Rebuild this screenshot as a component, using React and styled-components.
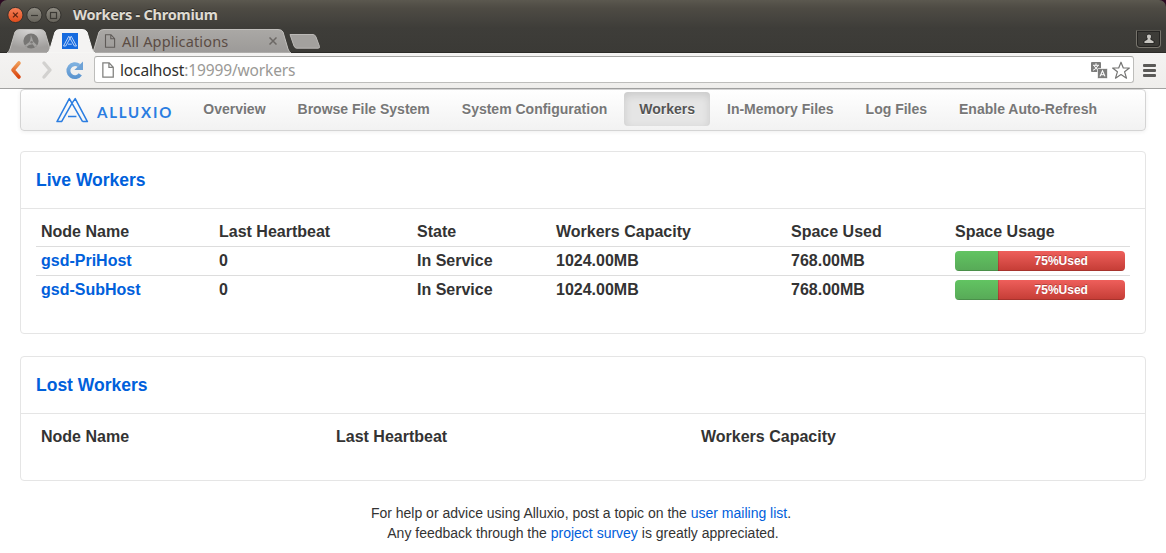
import React from "react";
import styled, { createGlobalStyle, css } from "styled-components";

const Global = createGlobalStyle`
  * { box-sizing: border-box; }
  html, body { margin: 0; padding: 0; }
  body { background: #fff; overflow: hidden; font-family: "Liberation Sans", Arial, sans-serif; color: #333; }
`;

const uiFont = css`font-family: "Noto Sans", "Open Sans", sans-serif;`;
const blue = "#0060db";

const Window = styled.div`
  width: 1166px;
  height: 553px;
  overflow: hidden;
`;

const Frame = styled.header`
  height: 53px;
  background: #2c0a22;
`;
const FrameInner = styled.div`
  height: 53px;
  border-radius: 7px 7px 0 0;
  background: linear-gradient(#5b584f 0, #4e4b44 8px, #3e3d39 28px, #3b3a36 52px);
  border-bottom: 1px solid #2c2b28;
`;
const TitleBar = styled.div`
  height: 29px;
  display: flex;
  align-items: center;
  padding-left: 7px;
`;
const WindowTitle = styled.div`
  ${uiFont}
  font-size: 14.5px;
  line-height: 20px;
  font-weight: 700;
  letter-spacing: -0.24px;
  color: #dfdbd2;
  margin: 0 0 1px 11px;
  text-shadow: 0 -1px 0 #2b2a27;
  white-space: nowrap;
`;
const TabStrip = styled.div`
  height: 24px;
  display: flex;
  padding-left: 7px;
`;
const Tab = styled.div`
  position: relative;
  flex: none;
  width: ${(p) => p.$width}px;
  height: 24px;
  margin-right: ${(p) => p.$gap}px;
  z-index: ${(p) => (p.$active ? 2 : 1)};
  display: flex;
  align-items: center;
  padding-left: ${(p) => p.$pad}px;
  > svg:first-child { position: absolute; left: 0; top: 0; z-index: -1; }
`;
const TabLabel = styled.span`
  ${uiFont}
  font-size: 14.5px;
  line-height: 20px;
  letter-spacing: 0.16px;
  color: #5b4c44;
  width: 147px;
  margin-left: 6px;
  white-space: nowrap;
`;
const NewTab = styled.svg`
  margin-top: 5px;
  flex: none;
`;
const UserButton = styled.div`
  width: 25px;
  height: 18px;
  margin: 1px 5px 0 auto;
  border: 1px solid #77746c;
  border-top-color: #55534d;
  border-radius: 1px 1px 4px 4px;
  box-shadow: inset 0 0 0 1px #252422;
  display: flex;
  align-items: center;
  justify-content: center;
`;

const Toolbar = styled.div`
  height: 36px;
  display: flex;
  align-items: center;
  padding: 0 9px 2px 9px;
  background: linear-gradient(#f4f3f2, #efeeec);
  border-bottom: 1px solid #a2a2a1;
`;
const AddressBar = styled.div`
  width: 1040px;
  height: 27px;
  margin-left: 10px;
  border: 1px solid #bdbdbb;
  border-top-color: #a5a5a3;
  border-radius: 3px;
  background: #fff;
  display: flex;
  align-items: center;
  padding: 0 2px 0 6px;
`;
const Url = styled.div`
  ${uiFont}
  font-size: 15.5px;
  line-height: 22px;
  letter-spacing: -0.14px;
  color: #9a9996;
  margin-left: 5px;
  flex: 1;
  white-space: nowrap;
`;
const Host = styled.span`color: #302f2d;`;
const UrlActions = styled.div`
  display: flex;
  align-items: center;
  gap: 3px;
  padding-top: 1px;
`;
const Burger = styled.div`
  width: 13px;
  height: 13px;
  margin: 1px 0 0 9px;
  display: flex;
  flex-direction: column;
  justify-content: space-between;
`;
const BurgerLine = styled.i`
  height: 3px;
  border-radius: 1px;
  background: #5a5957;
`;

const Page = styled.main`padding: 0 20px;`;
const Navbar = styled.nav`
  height: 42px;
  display: flex;
  align-items: flex-start;
  padding: 2px 0 0 35px;
  border: 1px solid #d4d4d4;
  border-radius: 4px;
  background: linear-gradient(#fff, #f2f2f2);
  box-shadow: 0 1px 4px rgba(0, 0, 0, 0.065);
`;
const Brand = styled.div`
  width: 132.2px;
  height: 34px;
  display: flex;
  align-items: center;
  padding-top: 1px;
`;
const BrandName = styled.span`
  font-family: Lato, sans-serif;
  font-size: 15px;
  line-height: 18px;
  font-weight: 700;
  letter-spacing: 1.8px;
  color: #2a7de1;
  margin: 4px 0 0 8px;
`;
const NavItem = styled.a`
  height: 34px;
  margin-right: 1.8px;
  padding: 7px 15.1px;
  border-radius: 4px;
  font-size: 14px;
  line-height: 20px;
  font-weight: 700;
  white-space: nowrap;
  color: ${(p) => (p.$active ? "#555" : "#777")};
  text-shadow: 0 1px 0 #fff;
  ${(p) => p.$active && css`
    background: #e5e5e5;
    box-shadow: inset 0 3px 8px rgba(0, 0, 0, 0.125);
  `}
`;

const Panel = styled.section`
  height: ${(p) => p.$height}px;
  margin-top: ${(p) => p.$top}px;
  border: 1px solid #e5e5e5;
  border-radius: 4px;
`;
const PanelTitle = styled.h4`
  margin: 0;
  height: 57px;
  padding: 18px 15px;
  border-bottom: 1px solid #e5e5e5;
  font-size: 17.5px;
  line-height: 20px;
  font-weight: 700;
  color: ${blue};
`;
const Table = styled.div`padding: 9px 15px;`;
const Row = styled.div`
  display: grid;
  grid-template-columns: ${(p) => p.$cols};
  border-top: ${(p) => (p.$head ? "0" : "1px solid #ddd")};
`;
const Cell = styled.div`
  padding: 4px 5px;
  height: 28px;
  font-size: 16px;
  line-height: 20px;
  font-weight: 700;
  white-space: nowrap;
  color: ${(p) => (p.$link ? blue : "#333")};
`;
const Progress = styled.div`
  display: flex;
  height: 20px;
  border-radius: 4px;
  overflow: hidden;
`;
const Bar = styled.div`
  width: ${(p) => p.$share}%;
  font-size: 12px;
  line-height: 20px;
  text-align: center;
  color: #fff;
  text-shadow: 0 -1px 0 rgba(0, 0, 0, 0.25);
  background: ${(p) => (p.$used ? "linear-gradient(#ee5f5b, #c43c35)" : "linear-gradient(#62c462, #57a957)")};
  box-shadow: ${(p) => (p.$used ? "inset 1px 0 0 rgba(0,0,0,.15), " : "")}inset 0 -1px 0 rgba(0, 0, 0, 0.15);
`;
const Footer = styled.footer`
  margin-top: 22px;
  padding-right: 4px;
  font-size: 14px;
  line-height: 20px;
  text-align: center;
`;
const FooterLine = styled.p`
  margin: 0;
  padding-left: ${(p) => p.$shift || 0}px;
`;
const Link = styled.a`color: ${blue};`;

const WindowControls = () => (
  <svg width="55" height="18" viewBox="0 0 55 18">
    <defs>
      <linearGradient id="closeFill" x2="0" y2="1"><stop stopColor="#f6825a" /><stop offset="1" stopColor="#df4b1a" /></linearGradient>
      <linearGradient id="greyFill" x2="0" y2="1"><stop stopColor="#918e85" /><stop offset="1" stopColor="#65625a" /></linearGradient>
    </defs>
    <circle cx="8.4" cy="9" r="7.6" fill="url(#closeFill)" stroke="#34322e" />
    <circle cx="27.4" cy="9" r="7.6" fill="url(#greyFill)" stroke="#34322e" />
    <circle cx="46.4" cy="9" r="7.6" fill="url(#greyFill)" stroke="#34322e" />
    <path d="M6 6.6l4.8 4.8M10.8 6.6L6 11.4" stroke="#5d2411" strokeWidth="1.3" />
    <path d="M24 9.5h7" stroke="#3b3934" strokeWidth="1.2" />
    <rect x="43.5" y="6.5" width="6" height="6" fill="none" stroke="#3b3934" strokeWidth="1.2" />
  </svg>
);

const TabShape = ({ width, fill, edge, slope = 9 }) => (
  <svg width={width} height="24" viewBox={`0 0 ${width} 24`}>
    <defs>
      <linearGradient id="inactiveTab" x2="0" y2="1"><stop stopColor="#aaa8a5" /><stop offset="1" stopColor="#9c9a98" /></linearGradient>
      <radialGradient id="glowTab" cx=".5" cy="0" r=".8"><stop stopColor="#d6d5d4" /><stop offset="1" stopColor="#a09e9c" /></radialGradient>
    </defs>
    <path
      d={`M0 24Q2 23 3 20L${slope - 1} 3Q${slope} .5 ${slope + 4} .5H${width - slope - 4}Q${width - slope} .5 ${width - slope + 1} 3L${width - 3} 20Q${width - 2} 23 ${width} 24Z`}
      fill={fill}
      stroke={edge}
    />
  </svg>
);

const PageIcon = ({ color, height = 14, width = 12 }) => (
  <svg width={width} height={height} viewBox="0 0 12 14">
    <path d="M1.5 .7H7L10.6 4.6V13.3H1.5ZM6.8 .8V4.8H10.5" fill="none" stroke={color} strokeWidth="1.1" />
  </svg>
);

const GlobeMark = () => (
  <svg width="16" height="16" viewBox="0 0 16 16">
    <circle cx="8" cy="8" r="7.6" fill="#777674" />
    <path d="M8 2.5V7.5" stroke="#8f8e8c" strokeWidth="1.4" fill="none" />
    <path d="M8.6 3.6L10.2 8.6L14 12.2L12 14.2L9.5 11.2L6 12L3.4 14L1.8 12.4L6.4 9Z" fill="#a3a2a0" />
    <circle cx="8.6" cy="9.3" r="1.2" fill="#7d7b79" />
  </svg>
);

const Favicon = () => (
  <svg width="16" height="16" viewBox="0 0 16 16">
    <rect width="16" height="16" fill="#166bdf" />
    <path d="M12.4 13L6.8 3.2L1.5 13H3.8L9.2 3.2L14.5 13H12.4M6 11.2H9.8" fill="none" stroke="#c9ddfa" strokeWidth=".9" />
  </svg>
);

const NavIcons = () => (
  <svg width="75" height="22" viewBox="0 0 75 22">
    <defs>
      <linearGradient id="backFill" x2="0" y2="1"><stop stopColor="#ef9a55" /><stop offset="1" stopColor="#d9450f" /></linearGradient>
      <linearGradient id="reloadFill" x2="0" y2="1"><stop stopColor="#7db0df" /><stop offset="1" stopColor="#5d96d0" /></linearGradient>
    </defs>
    <path d="M10 4L4 11L10 18" fill="none" stroke="url(#backFill)" strokeWidth="3.6" strokeLinecap="round" strokeLinejoin="round" />
    <path d="M35 4L41 11L35 18" fill="none" stroke="#d2d1cf" strokeWidth="3.4" strokeLinecap="round" strokeLinejoin="round" />
    <path d="M70 6.6A6.5 6.5 0 1 0 71.3 15.3" fill="none" stroke="url(#reloadFill)" strokeWidth="3.9" />
    <path d="M74 2.5V11H65.4Z" fill="#6ea2d6" />
  </svg>
);

const TranslateIcon = () => (
  <svg width="17" height="17" viewBox="0 0 17 17">
    <rect x="0" y="0" width="10" height="10" rx="1" fill="#7d7d7c" />
    <path d="M5 1.3V3M2 3.3H8M3 3.5Q4.5 7 8 8.3M7 3.5Q5.5 7 2 8.3" stroke="#fff" fill="none" />
    <rect x="6.5" y="6.5" width="10" height="10" rx="1" fill="#7d7d7c" stroke="#fff" strokeWidth=".7" />
    <path d="M9 14.4L11.5 8.8L14 14.4M9.8 12.7H13.2" stroke="#fff" fill="none" strokeWidth="1.1" />
  </svg>
);

const StarIcon = () => (
  <svg width="20" height="19" viewBox="0 0 20 19">
    <path d="M10 1.2L12.3 7H18.4L13.6 10.8L15.5 17.2L10 13.6L4.5 17.2L6.4 10.8L1.6 7H7.7Z" fill="#fff" stroke="#747473" strokeWidth="1.2" strokeLinejoin="round" />
  </svg>
);

const PersonIcon = () => (
  <svg width="12" height="12" viewBox="0 0 12 12">
    <path d="M6 1a2.6 2.6 0 0 1 1.8 4.4V6.4L11 8V10.5H1V8L4.2 6.4V5.4A2.6 2.6 0 0 1 6 1Z" fill="#c8c6c1" stroke="#171615" strokeWidth=".8" />
  </svg>
);

const AlluxioMark = () => (
  <svg width="33" height="26" viewBox="0 0 33 26">
    <path d="M26.6 24.6L13.3 1.6L1 24.6H5.6L15.8 6.6M16.4 5.6L19.2 1.6L31.4 24.6H26.6M12 19.6H20.4" fill="none" stroke="#2a7de1" strokeWidth="1.5" strokeLinejoin="round" />
  </svg>
);

const navItems = ["Overview", "Browse File System", "System Configuration", "Workers", "In-Memory Files", "Log Files", "Enable Auto-Refresh"];
const liveHeads = ["Node Name", "Last Heartbeat", "State", "Workers Capacity", "Space Used", "Space Usage"];
const lostHeads = ["Node Name", "Last Heartbeat", "Workers Capacity"];
const workers = ["gsd-PriHost", "gsd-SubHost"];
const liveCols = "178px 198px 139px 235px 164px 180px";
const lostCols = "295px 365px 1fr";

export default function App() {
  return (
    <Window>
      <Global />
      <Frame>
        <FrameInner>
          <TitleBar>
            <WindowControls />
            <WindowTitle>Workers - Chromium</WindowTitle>
          </TitleBar>
          <TabStrip>
            <Tab $width={46} $gap={-6} $pad={16}>
              <TabShape width={46} fill="url(#glowTab)" edge="#c1bfbc" />
              <GlobeMark />
            </Tab>
            <Tab $width={48} $gap={-4} $pad={15} $active>
              <TabShape width={48} fill="#f4f3f2" edge="#f8f8f7" />
              <Favicon />
            </Tab>
            <Tab $width={200} $gap={-2} $pad={13}>
              <TabShape width={200} fill="url(#inactiveTab)" edge="#c1bfbc" />
              <PageIcon color="#5f5b58" />
              <TabLabel>All Applications</TabLabel>
              <svg width="8" height="8" viewBox="0 0 8 8"><path d="M.5 .5l7 7M7.5 .5l-7 7" stroke="#6c6865" strokeWidth="1.5" /></svg>
            </Tab>
            <NewTab width="32" height="15" viewBox="0 0 32 15">
              <path d="M1 .5H24Q26 .5 27 3L30.5 12.5Q31 14.2 29 14.2H7.5Q6 14.2 5 12Z" fill="#a3a19e" stroke="#bbb9b6" />
            </NewTab>
            <UserButton><PersonIcon /></UserButton>
          </TabStrip>
        </FrameInner>
      </Frame>
      <Toolbar>
        <NavIcons />
        <AddressBar>
          <PageIcon color="#80807e" width={14} height={16} />
          <Url><Host>localhost</Host>:19999/workers</Url>
          <UrlActions>
            <TranslateIcon />
            <StarIcon />
          </UrlActions>
        </AddressBar>
        <Burger><BurgerLine /><BurgerLine /><BurgerLine /></Burger>
      </Toolbar>
      <Page>
        <Navbar>
          <Brand>
            <AlluxioMark />
            <BrandName>ALLUXIO</BrandName>
          </Brand>
          {navItems.map((t) => <NavItem key={t} $active={t === "Workers"}>{t}</NavItem>)}
        </Navbar>
        <Panel $height={183} $top={20}>
          <PanelTitle>Live Workers</PanelTitle>
          <Table>
            <Row $cols={liveCols} $head>{liveHeads.map((t) => <Cell key={t}>{t}</Cell>)}</Row>
            {workers.map((name) => (
              <Row key={name} $cols={liveCols}>
                <Cell $link>{name}</Cell>
                <Cell>0</Cell>
                <Cell>In Service</Cell>
                <Cell>1024.00MB</Cell>
                <Cell>768.00MB</Cell>
                <Cell>
                  <Progress><Bar $share={25} /><Bar $share={75} $used>75%Used</Bar></Progress>
                </Cell>
              </Row>
            ))}
          </Table>
        </Panel>
        <Panel $height={125} $top={22}>
          <PanelTitle>Lost Workers</PanelTitle>
          <Table>
            <Row $cols={lostCols} $head>{lostHeads.map((t) => <Cell key={t}>{t}</Cell>)}</Row>
          </Table>
        </Panel>
        <Footer>
          <FooterLine>For help or advice using Alluxio, post a topic on the <Link>user mailing list</Link>.</FooterLine>
          <FooterLine $shift={4}>Any feedback through the <Link>project survey</Link> is greatly appreciated.</FooterLine>
        </Footer>
      </Page>
    </Window>
  );
}
